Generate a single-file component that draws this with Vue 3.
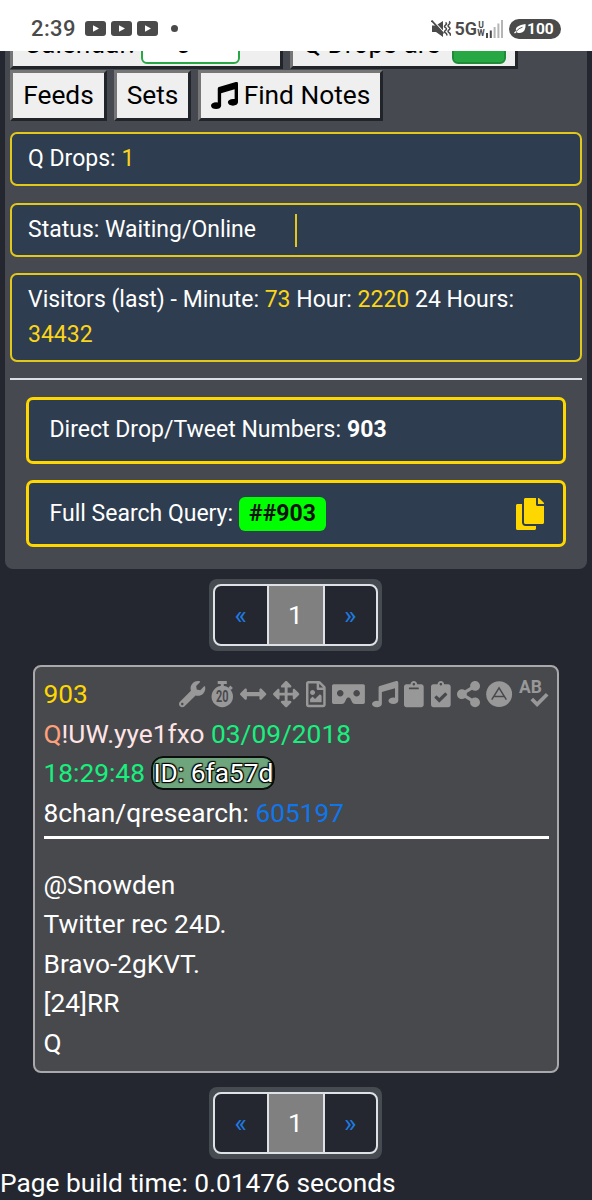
<template>
  <div class="page">
    <header class="status-bar">
      <span class="status-bar__time">2:39</span>
      <svg v-for="n in 3" :key="n" class="status-bar__video" viewBox="0 0 21 15">
        <rect width="21" height="15" rx="3" fill="#4a4a4a" />
        <path d="M8 4.2v6.6l6-3.3z" fill="#fff" />
      </svg>
      <span class="status-bar__dot"></span>
      <div class="status-bar__right">
        <svg class="status-bar__mute" viewBox="0 0 20 18">
          <path d="M1 5.500h4L12 1v16l-7-5H1z" fill="#4a4a4a" />
          <path d="M1.500 0l12 13" stroke="#fff" stroke-width="1.400" />
          <path d="M.5 .5l12 13" stroke="#4a4a4a" stroke-width="1.800" />
          <path d="M14.500 2.500q2 1.200 0 2.600t0 2.600 0 2.600 0 2.600 1 2.600M18 1.500q2 1.300 0 2.800t0 2.800 0 2.800 0 2.800 1 3" fill="none" stroke="#4a4a4a" stroke-width="1.500" />
        </svg>
        <span class="status-bar__net">5G</span>
        <span class="status-bar__uw"><i>U</i><i>W</i></span>
        <svg class="status-bar__signal" viewBox="0 0 18 18">
          <path d="M1 13h2v5H1zM4.800 10.500h2V18h-2z" fill="#4a4a4a" />
          <path d="M8.600 7h2v11h-2zM12.400 3.500h2V18h-2zM16 0h2v18h-2z" fill="#b5b5b5" />
        </svg>
        <span class="status-bar__battery">
          <svg viewBox="0 0 12 10"><path d="M11.500 0C12 5 10 9 5.500 9 4 9 3.200 8.600 2.700 8L1 9.500 0 8.700 2 6.700C1.200 3 4.500 1.200 11.500 0z" fill="#fff" /><path d="M2 7.500Q5 4 8.500 3.200" stroke="#4a4a4a" fill="none" stroke-width=".9" /></svg>
          100
        </span>
      </div>
    </header>

    <section class="panel">
      <div class="row row--first">
        <button class="btn btn--calendar"><span class="btn__label">Calendar:</span><span class="select">0</span></button>
        <button class="btn btn--drops"><span class="btn__label">Q Drops are</span><span class="toggle"></span></button>
      </div>
      <div class="row">
        <button class="btn btn--feeds">Feeds</button>
        <button class="btn btn--sets">Sets</button>
        <button class="btn btn--notes">
          <svg viewBox="0 0 512 512"><path :d="musicPath" /></svg>
          Find Notes
        </button>
      </div>
      <div class="info">Q Drops: <b>1</b></div>
      <div class="info">Status: Waiting/Online<span class="info__cursor"></span></div>
      <div class="info">Visitors (last) - Minute: <b>73</b> Hour: <b>2220</b> 24 Hours: <b>34432</b></div>
      <hr class="panel__line">
      <div class="query">Direct Drop/Tweet Numbers:<strong>903</strong></div>
      <div class="query">
        Full Search Query:
        <span class="query__badge">##903</span>
        <svg class="query__copy" viewBox="0 0 448 512"><path d="M320 448v40c0 13.255-10.745 24-24 24H24c-13.255 0-24-10.745-24-24V120c0-13.255 10.745-24 24-24h72v296c0 30.879 25.121 56 56 56h168zm0-344V0H152c-13.255 0-24 10.745-24 24v368c0 13.255 10.745 24 24 24h272c13.255 0 24-10.745 24-24V128H344c-13.2 0-24-10.8-24-24zm120.971-31.029L375.029 7.029A24 24 0 0 0 358.059 0H352v96h96v-6.059a24 24 0 0 0-7.029-16.97z" /></svg>
      </div>
    </section>

    <nav class="pager">
      <div class="pager__list">
        <a class="pager__item">«</a>
        <a class="pager__item pager__item--active">1</a>
        <a class="pager__item">»</a>
      </div>
    </nav>

    <article class="card">
      <div class="card__head">
        <span class="card__number">903</span>
        <div class="tools">
          <template v-for="icon in icons" :key="icon.name">
            <svg v-if="icon.path" :class="'tool tool--' + icon.name" :viewBox="'0 0 ' + icon.width + ' 512'">
              <path :d="icon.path" />
            </svg>
            <svg v-else-if="icon.name === 'timer'" class="tool tool--timer" viewBox="0 0 22 26">
              <path d="M6.500 0h9v3h-3v3h-3V3h-3zM17 7l2-2.500 2.500 2.500-2 2z" />
              <circle cx="11" cy="15.300" r="10.600" />
              <text x="4.800" y="21" textLength="12.400" lengthAdjust="spacingAndGlyphs" class="tool__digits">20</text>
            </svg>
            <svg v-else-if="icon.name === 'letter'" class="tool tool--letter" viewBox="0 0 26 26">
              <circle cx="13" cy="13" r="12.800" />
              <path class="tool__stroke" d="M5.700 18.500L12.900 6.800l7.200 11.700M8.300 15.300h10" />
            </svg>
            <svg v-else class="tool tool--spell" viewBox="0 0 30 26.300">
              <text x="0" y="12.200" class="tool__letters">AB</text>
              <path d="M11.500 19.300l2.600-2.600 4 4 8.800-8.700 2.600 2.600-11.400 11.400z" />
            </svg>
          </template>
        </div>
      </div>
      <div><span class="card__q">Q</span><span class="card__trip">!UW.yye1fxo</span> <span class="card__date">03/09/2018</span></div>
      <div><span class="card__date">18:29:48</span> <span class="card__id">ID: 6fa57d</span></div>
      <div>8chan/qresearch: <a class="card__link">605197</a></div>
      <hr class="card__line">
      <div v-for="line in lines" :key="line">{{ line }}</div>
    </article>

    <nav class="pager pager--bottom">
      <div class="pager__list">
        <a class="pager__item">«</a>
        <a class="pager__item pager__item--active">1</a>
        <a class="pager__item">»</a>
      </div>
    </nav>

    <footer class="footer">Page build time: 0.01476 seconds</footer>
  </div>
</template>

<script setup>
const lines = ['@Snowden', 'Twitter rec 24D.', 'Bravo-2gKVT.', '[24]RR', 'Q']

const musicPath = 'M470.38 1.51L150.41 96A32 32 0 0 0 128 126.51v261.41A139 139 0 0 0 96 384c-53 0-96 28.66-96 64s43 64 96 64 96-28.66 96-64V214.32l256-75v184.61a138.4 138.4 0 0 0-32-3.93c-53 0-96 28.66-96 64s43 64 96 64 96-28.65 96-64V32a32 32 0 0 0-41.62-30.49z'

const icons = [
  { name: 'wrench', width: 512, path: 'M507.73 109.1c-2.24-9.03-13.54-12.09-20.12-5.51l-74.36 74.36-67.88-11.31-11.31-67.88 74.36-74.36c6.62-6.62 3.43-17.9-5.66-20.16-47.38-11.74-99.55.91-136.58 37.93-39.64 39.64-50.55 97.1-34.05 147.2L18.74 402.76c-24.99 24.99-24.99 65.51 0 90.5 24.99 24.99 65.51 24.99 90.5 0l213.21-213.21c50.12 16.71 107.47 5.68 147.37-34.22 37.07-37.07 49.7-89.32 37.91-136.73zM64 472c-13.25 0-24-10.75-24-24 0-13.26 10.75-24 24-24s24 10.74 24 24c0 13.25-10.75 24-24 24z' },
  { name: 'timer' },
  { name: 'arrows-h', width: 512, path: 'M377.941 169.941V216H134.059v-46.059c0-21.382-25.851-32.09-40.971-16.971L7.029 239.029c-9.373 9.373-9.373 24.568 0 33.941l86.059 86.059c15.119 15.119 40.971 4.411 40.971-16.971V296h243.882v46.059c0 21.382 25.851 32.09 40.971 16.971l86.059-86.059c9.373-9.373 9.373-24.568 0-33.941l-86.059-86.059c-15.119-15.12-40.971-4.412-40.971 16.97z' },
  { name: 'arrows', width: 512, path: 'M352.201 425.775l-79.196 79.196c-9.373 9.373-24.568 9.373-33.941 0l-79.196-79.196c-15.119-15.119-4.411-40.971 16.971-40.97h51.162L228 284H127.196v51.162c0 21.382-25.851 32.09-40.971 16.971L7.029 272.937c-9.373-9.373-9.373-24.569 0-33.941L86.225 159.8c15.119-15.119 40.971-4.411 40.971 16.971V228H228V127.196h-51.23c-21.382 0-32.09-25.851-16.971-40.971l79.196-79.196c9.373-9.373 24.568-9.373 33.941 0l79.196 79.196c15.119 15.119 4.411 40.971-16.971 40.971h-51.162V228h100.804v-51.162c0-21.382 25.851-32.09 40.971-16.971l79.196 79.196c9.373 9.373 9.373 24.569 0 33.941L425.773 352.2c-15.119 15.119-40.971 4.411-40.971-16.971V284H284v100.804h51.23c21.382 0 32.09 25.851 16.971 40.971z' },
  { name: 'image', width: 384, path: 'M369.9 97.9L286 14C277 5 264.8-.1 252.1-.1H48C21.5 0 0 21.5 0 48v416c0 26.5 21.5 48 48 48h288c26.5 0 48-21.5 48-48V131.9c0-12.7-5.1-25-14.1-34zM332.1 128H256V51.9l76.1 76.1zM48 464V48h160v104c0 13.3 10.7 24 24 24h104v288H48zm32-48h224V288l-23.5-23.5c-4.7-4.7-12.3-4.7-17 0L176 352l-39.5-39.5c-4.7-4.7-12.3-4.7-17 0L80 352v64zm48-240c-26.5 0-48 21.5-48 48s21.5 48 48 48 48-21.5 48-48-21.5-48-48-48z' },
  { name: 'vr', width: 640, path: 'M608 64H32C14.33 64 0 78.33 0 96v320c0 17.67 14.33 32 32 32h160.22c25.19 0 48.03-14.77 58.36-37.74l27.74-61.64C286.21 331.08 302.35 320 320 320s33.79 11.08 41.68 28.62l27.74 61.64C399.75 433.23 422.6 448 447.78 448H608c17.67 0 32-14.33 32-32V96c0-17.67-14.33-32-32-32zM160 304c-35.35 0-64-28.65-64-64s28.65-64 64-64 64 28.65 64 64-28.65 64-64 64zm320 0c-35.35 0-64-28.65-64-64s28.65-64 64-64 64 28.65 64 64-28.65 64-64 64z' },
  { name: 'music', width: 512, path: musicPath },
  { name: 'clipboard', width: 384, path: 'M384 112v352c0 26.51-21.49 48-48 48H48c-26.51 0-48-21.49-48-48V112c0-26.51 21.49-48 48-48h80c0-35.29 28.71-64 64-64s64 28.71 64 64h80c26.51 0 48 21.49 48 48zM192 40c-13.255 0-24 10.745-24 24s10.745 24 24 24 24-10.745 24-24-10.745-24-24-24m96 114v-20a6 6 0 0 0-6-6H102a6 6 0 0 0-6 6v20a6 6 0 0 0 6 6h180a6 6 0 0 0 6-6z' },
  { name: 'check', width: 384, path: 'M336 64h-80c0-35.3-28.7-64-64-64s-64 28.7-64 64H48C21.5 64 0 85.5 0 112v352c0 26.5 21.5 48 48 48h288c26.5 0 48-21.5 48-48V112c0-26.5-21.5-48-48-48zM192 40c13.3 0 24 10.7 24 24s-10.7 24-24 24-24-10.7-24-24 10.7-24 24-24zm121.2 231.8l-143 141.8c-4.7 4.7-12.3 4.6-17-.1l-82.6-83.3c-4.7-4.7-4.6-12.3.1-17L99.1 285c4.7-4.7 12.3-4.6 17 .1l46 46.4 106-105.2c4.7-4.7 12.3-4.6 17 .1l28.2 28.4c4.7 4.8 4.6 12.3-.1 17z' },
  { name: 'share', width: 448, path: 'M352 320c-22.608 0-43.387 7.819-59.79 20.895l-102.486-64.054a96.551 96.551 0 0 0 0-41.683l102.486-64.054C308.613 184.181 329.392 192 352 192c53.019 0 96-42.981 96-96S405.019 0 352 0s-96 42.981-96 96c0 7.158.79 14.13 2.276 20.841L155.79 180.895C139.387 167.819 118.608 160 96 160c-53.019 0-96 42.981-96 96s42.981 96 96 96c22.608 0 43.387-7.819 59.79-20.895l102.486 64.054A96.301 96.301 0 0 0 256 416c0 53.019 42.981 96 96 96s96-42.981 96-96-42.981-96-96-96z' },
  { name: 'letter' },
  { name: 'spell' },
]
</script>

<style>
body {
  background: #24272f;
}
</style>

<style scoped>
.page {
  box-sizing: border-box;
  height: 1200px;
  padding-top: 20px;
  overflow: hidden;
  background: #24272f;
  color: #fff;
  font-family: Roboto, "Liberation Sans", sans-serif;
  font-size: 26.3px;
  line-height: 39.5px;
}

.page *,
.page svg {
  box-sizing: border-box;
}

.status-bar {
  position: fixed;
  top: 0;
  left: 0;
  z-index: 10;
  display: flex;
  align-items: center;
  width: 592px;
  height: 51px;
  padding: 6px 31px 0;
  background: #fff;
  color: #4a4a4a;
}

.status-bar__time {
  width: 54px;
  font-size: 22px;
  font-weight: 500;
  line-height: 26px;
  letter-spacing: .4px;
}

.status-bar__video {
  width: 21px;
  height: 15px;
  margin-right: 5px;
}

.status-bar__dot {
  width: 7px;
  height: 7px;
  margin-left: 8px;
  border-radius: 50%;
  background: #4a4a4a;
}

.status-bar__right {
  display: flex;
  align-items: center;
  margin-left: auto;
}

.status-bar__mute {
  width: 20px;
  height: 18px;
}

.status-bar__net {
  margin-left: 3px;
  font-size: 18px;
  font-weight: 600;
  line-height: 22px;
}

.status-bar__uw {
  display: flex;
  flex-direction: column;
  width: 8px;
  font-size: 8.500px;
  font-weight: 700;
  line-height: 8px;
  text-align: center;
}

.status-bar__uw i {
  font-style: normal;
}

.status-bar__signal {
  width: 18px;
  height: 18px;
}

.status-bar__battery {
  display: flex;
  align-items: center;
  gap: 1px;
  width: 52px;
  height: 20px;
  margin-left: 6px;
  padding-left: 5px;
  border-radius: 10px;
  background: #4a4a4a;
  color: #fff;
  font-size: 15.500px;
  font-weight: 700;
  line-height: 20px;
}

.status-bar__battery svg {
  width: 12px;
  height: 10px;
}

.panel {
  height: 549px;
  margin: 0 5px;
  padding: 0 5px;
  border-radius: 0 0 8px 8px;
  background: #464950;
}

.row {
  display: flex;
  gap: 7px;
  height: 51px;
}

.row--first {
  height: 50px;
  padding-bottom: 1px;
}

.btn {
  display: flex;
  align-items: center;
  justify-content: center;
  padding: 0 0 1px;
  border: 3px solid;
  border-color: #767676 #212529 #212529 #767676;
  background: #efefef;
  color: #000;
  font-family: inherit;
  font-size: 26.3px;
  white-space: nowrap;
}

.btn__label {
  padding-bottom: 2px;
}

.btn--calendar {
  justify-content: flex-start;
  width: 273px;
  padding: 0 0 0 11px;
}

.select {
  width: 99px;
  height: 38px;
  margin-left: auto;
  margin-right: 40px;
  padding-right: 14px;
  border: 2px solid #28a745;
  border-radius: 6px;
  background: #fff;
  line-height: 33px;
}

.btn--drops {
  justify-content: space-between;
  width: 228px;
  padding: 0 9px 0 10px;
}

.toggle {
  width: 54px;
  height: 38px;
  border: 2px solid #208a38;
  border-radius: 6px;
  background: #28a745;
}

.btn--feeds {
  width: 97px;
}

.btn--sets {
  width: 77px;
}

.btn--notes {
  gap: 6px;
  width: 185px;
}

.btn--notes svg {
  width: 27px;
  height: 27px;
}

.info {
  margin-top: 16.500px;
  padding: 8px 16px 7.500px;
  border: 2px solid #e3c81c;
  border-radius: 7px;
  background: #2e3d4f;
  font-size: 23px;
  line-height: 34.500px;
}

.row + .info {
  margin-top: 11px;
}

.info b {
  color: #fbd51a;
  font-weight: 400;
}

.info__cursor {
  display: inline-block;
  width: 2px;
  height: 33px;
  margin: -3px 0 -3px 39px;
  background: #e3c81c;
  vertical-align: middle;
}

.panel__line {
  height: 2px;
  margin: 16px 0 17px;
  border: 0;
  background: #dcdee4;
}

.query {
  display: flex;
  align-items: center;
  gap: 6px;
  height: 67px;
  margin: 0 16px 16.500px;
  padding: 0 19px 0 20.500px;
  border: 3px solid #ffd700;
  border-radius: 7px;
  background: #2e3d4f;
  font-size: 23px;
}

.query__badge {
  height: 34px;
  padding: 0 10px;
  border-radius: 6px;
  background: #0f0;
  color: #111;
  font-weight: 700;
  line-height: 34px;
}

.query__copy {
  width: 28px;
  height: 32px;
  margin-left: auto;
  fill: #ffd700;
}

.pager {
  width: 173px;
  height: 72px;
  margin: 10px 0 0 209px;
  padding: 5px 4px;
  border-radius: 8px;
  background: #464a51;
}

.pager__list {
  display: flex;
  height: 62px;
  border: 2px solid #dee2e6;
  border-radius: 8px;
  background: #24272f;
  overflow: hidden;
}

.pager__item {
  flex: 1;
  color: #1f7ae0;
  line-height: 59px;
  text-align: center;
}

.pager__item--active {
  flex: 0 0 58px;
  border: solid #dee2e6;
  border-width: 0 2px;
  background: #808080;
  color: #fff;
}

.card {
  width: 526px;
  height: 408px;
  margin: 14px 0 0 33px;
  padding: 8px 8px 8px 8.500px;
  border: 2px solid #a9a9ab;
  border-radius: 8px;
  background: #48494d;
}

.card__head {
  display: flex;
  justify-content: space-between;
}

.card__number {
  color: #ffd700;
}

.tools {
  display: flex;
  align-items: center;
  gap: 6.500px;
  height: 38px;
}

.tool {
  width: 26.300px;
  height: 26.300px;
  fill: #989898;
  overflow: visible;
}

.tool--timer {
  width: 22.500px;
}

.tool--image,
.tool--clipboard,
.tool--check {
  width: 19.700px;
}

.tool--vr {
  width: 32.900px;
}

.tool--share {
  width: 23px;
}

.tool--spell {
  width: 30px;
}

.tool__digits {
  fill: #48494d;
  font-size: 16px;
  font-weight: 700;
}

.tool__letters {
  font-size: 17.500px;
  font-weight: 700;
}

.tool__stroke {
  fill: none;
  stroke: #48494d;
  stroke-width: 1.500;
}

.card__q {
  color: #ffa07a;
}

.card__trip {
  color: #ffe4e6;
}

.card__date {
  color: #17f07e;
}

.card__id {
  border: 2px solid #0c0f0d;
  border-radius: 12px;
  background: #6fa57d;
  text-shadow: 1px 1px 1px #000, -1px -1px 1px #000, 1px -1px 1px #000, -1px 1px 1px #000;
}

.card__link {
  color: #0f76ea;
}

.card__line {
  height: 3px;
  margin: 3px 0 26.500px;
  border: 0;
  background: #fff;
}

.pager--bottom {
  margin-top: 14px;
}

.footer {
  margin-top: 5px;
}
</style>
